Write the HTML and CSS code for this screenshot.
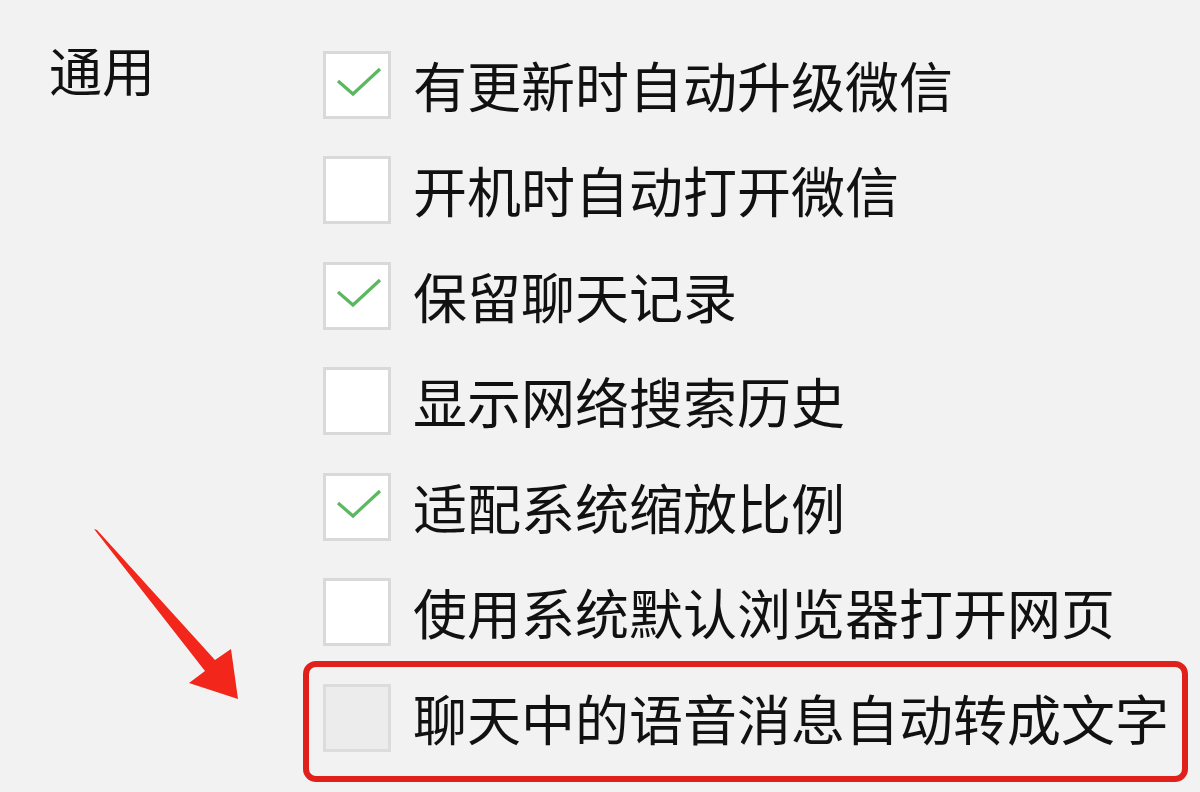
FILE: index.html
```html
<!DOCTYPE html>
<html lang="zh-CN">
<head>
    <meta charset="UTF-8">
    <meta name="viewport" content="width=device-width, initial-scale=1.0">
    <title>通用设置</title>
    <link rel="stylesheet" href="styles.css">
</head>
<body>
    <div class="settings">
        <div class="section-label">通用</div>

        <div class="option-list">
            <div class="option">
                <span class="box checked"><svg viewBox="0 0 68 68"><path d="M15 30 L30 43 L57 18"/></svg></span>
                <span class="text">有更新时自动升级微信</span>
            </div>
            <div class="option">
                <span class="box"></span>
                <span class="text">开机时自动打开微信</span>
            </div>
            <div class="option">
                <span class="box checked"><svg viewBox="0 0 68 68"><path d="M15 30 L30 43 L57 18"/></svg></span>
                <span class="text">保留聊天记录</span>
            </div>
            <div class="option">
                <span class="box"></span>
                <span class="text">显示网络搜索历史</span>
            </div>
            <div class="option">
                <span class="box checked"><svg viewBox="0 0 68 68"><path d="M15 30 L30 43 L57 18"/></svg></span>
                <span class="text">适配系统缩放比例</span>
            </div>
            <div class="option">
                <span class="box"></span>
                <span class="text">使用系统默认浏览器打开网页</span>
            </div>
            <div class="option highlight">
                <span class="box disabled"></span>
                <span class="text">聊天中的语音消息自动转成文字</span>
            </div>
        </div>

        <svg class="arrow" viewBox="0 0 1200 792">
            <polygon points="94,529 97,530 215,660 231,649 238,699 189,683 205,671"/>
        </svg>
    </div>
</body>
</html>
```

FILE: styles.css
```css
html, body {
    margin: 0;
    padding: 0;
}
body {
    background-color: #f2f2f2;
    font-family: "Noto Sans CJK SC", "Microsoft YaHei", sans-serif;
    color: #111;
    width: 1200px;
    height: 792px;
    overflow: hidden;
}
.settings {
    position: relative;
    display: flex;
    height: 792px;
}
.section-label {
    width: 323px;
    flex-shrink: 0;
    padding: 43px 0 0 49px;
    box-sizing: border-box;
    font-size: 53px;
    line-height: 53px;
}
.option-list {
    padding-top: 32px;
    display: flex;
    flex-direction: column;
}
.option {
    position: relative;
    height: 105.5px;
    display: flex;
    align-items: center;
}
.box {
    width: 68px;
    height: 68px;
    box-sizing: border-box;
    border: 3px solid #d9d9d9;
    background-color: #fff;
    margin-right: 22px;
    flex-shrink: 0;
    position: relative;
}
.box svg {
    position: absolute;
    left: -3px;
    top: -3px;
    width: 68px;
    height: 68px;
}
.box svg path {
    fill: none;
    stroke: #5cb860;
    stroke-width: 3.2;
}
.box.disabled {
    background-color: #ececec;
    border-color: #dcdcdc;
}
.text {
    font-size: 54px;
    line-height: 60px;
    white-space: nowrap;
}
.highlight::before {
    content: "";
    position: absolute;
    left: -20px;
    top: -4px;
    width: 885px;
    height: 121px;
    box-sizing: border-box;
    border: 6px solid #e0201a;
    border-radius: 13px;
}
.arrow {
    position: absolute;
    left: 0;
    top: 0;
    width: 1200px;
    height: 792px;
    pointer-events: none;
}
.arrow polygon {
    fill: #f2261b;
}
```
